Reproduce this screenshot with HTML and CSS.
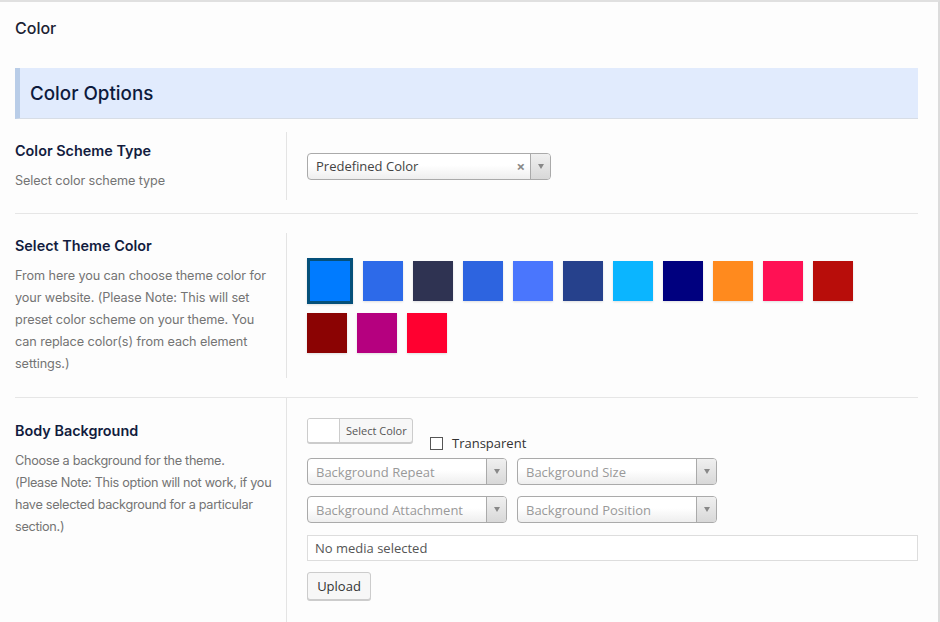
FILE: index.html
```html
<!DOCTYPE html>
<html>
<head>
<meta charset="utf-8">
<link rel="stylesheet" href="styles.css">
</head>
<body>
<div class="panel">
  <div class="page-title">Color</div>
  <div class="section-head">Color Options</div>

  <div class="row row-scheme">
    <div class="col-left">
      <div class="label">Color Scheme Type</div>
      <div class="desc">Select color scheme type</div>
    </div>
    <div class="col-right">
      <div class="select select-scheme">
        <span class="select-text">Predefined Color</span>
        <span class="select-clear">&#215;</span>
        <span class="select-arrow"><span class="tri"></span></span>
      </div>
    </div>
  </div>

  <div class="row row-theme">
    <div class="col-left">
      <div class="label">Select Theme Color</div>
      <div class="desc">From here you can choose theme color for your website. (Please Note: This will set preset color scheme on your theme. You can replace color(s) from each element settings.)</div>
    </div>
    <div class="col-right">
      <div class="swatches">
        <span class="swatch selected" style="background:#007bff"></span>
        <span class="swatch" style="background:#2d6ae9"></span>
        <span class="swatch" style="background:#2f3352"></span>
        <span class="swatch" style="background:#2d64e0"></span>
        <span class="swatch" style="background:#4a76fd"></span>
        <span class="swatch" style="background:#26418c"></span>
        <span class="swatch" style="background:#0bb5ff"></span>
        <span class="swatch" style="background:#00007f"></span>
        <span class="swatch" style="background:#ff8a1e"></span>
        <span class="swatch" style="background:#ff1154"></span>
        <span class="swatch" style="background:#b80d0a"></span>
        <span class="swatch" style="background:#8b0303"></span>
        <span class="swatch" style="background:#b5007f"></span>
        <span class="swatch" style="background:#ff0030"></span>
      </div>
    </div>
  </div>

  <div class="row row-body">
    <div class="col-left">
      <div class="label">Body Background</div>
      <div class="desc desc-lines">Choose a background for the theme.<br>(Please Note: This option will not work, if you<br>have selected background for a particular<br>section.)</div>
    </div>
    <div class="col-right">
      <div class="color-line">
        <div class="color-btn">
          <span class="color-preview"></span>
          <span class="color-btn-text">Select Color</span>
        </div>
        <label class="transparent"><span class="checkbox"></span>Transparent</label>
      </div>
      <div class="select-pair">
        <div class="select select-half">
          <span class="select-text placeholder">Background Repeat</span>
          <span class="select-arrow"><span class="tri"></span></span>
        </div>
        <div class="select select-half">
          <span class="select-text placeholder">Background Size</span>
          <span class="select-arrow"><span class="tri"></span></span>
        </div>
      </div>
      <div class="select-pair">
        <div class="select select-half">
          <span class="select-text placeholder">Background Attachment</span>
          <span class="select-arrow"><span class="tri"></span></span>
        </div>
        <div class="select select-half">
          <span class="select-text placeholder">Background Position</span>
          <span class="select-arrow"><span class="tri"></span></span>
        </div>
      </div>
      <div class="media-input">No media selected</div>
      <div class="upload-btn">Upload</div>
    </div>
  </div>
</div>
</body>
</html>
```

FILE: styles.css
```css
html, body {
  margin: 0;
  padding: 0;
}
body {
  width: 940px;
  height: 622px;
  overflow: hidden;
  background: #fcfcfc;
}
.panel {
  box-sizing: border-box;
  width: 940px;
  height: 622px;
  border-top: 2px solid #e0e0e0;
  border-right: 2px solid #dcdcdc;
  padding: 16px 20px 0 15px;
  background: #fdfdfd;
  font-family: "Inter", "Noto Sans", sans-serif;
}
.page-title {
  font-size: 16px;
  font-weight: 500;
  line-height: 20px;
  color: #1b2233;
}
.section-head {
  margin-top: 30px;
  height: 50px;
  line-height: 52px;
  background: #e1ebfd;
  border-left: 5px solid #b9cde8;
  border-bottom: 1px solid #d7dde6;
  padding-left: 10px;
  font-size: 18.8px;
  font-weight: 500;
  color: #0d1a3c;
}
.row {
  display: flex;
  border-bottom: 1px solid #e6e6e6;
}
.col-left {
  box-sizing: border-box;
  width: 272px;
  flex: none;
  border-right: 1px solid #e4e4e4;
  display: flex;
  flex-direction: column;
  justify-content: center;
}
.col-right {
  flex: 1;
  padding-left: 20px;
  display: flex;
  flex-direction: column;
  justify-content: center;
}
.label {
  font-size: 14.4px;
  font-weight: 600;
  line-height: 20px;
  color: #121c3e;
}
.desc {
  margin-top: 9px;
  font-size: 12.7px;
  line-height: 22px;
  letter-spacing: -0.1px;
  color: #747474;
  padding-right: 12px;
}
.desc-lines {
  white-space: nowrap;
  letter-spacing: -0.3px;
  padding-right: 0;
}
.row-scheme {
  padding: 13px 0;
}
.row-scheme .col-left {
  height: 68px;
}
.row-theme {
  padding: 19px 0;
}
.row-theme .col-left {
  height: 145px;
}
.row-body {
  border-bottom: none;
}
.row-body .col-left {
  justify-content: flex-start;
  padding-top: 23px;
}
.row-body .col-right {
  padding-top: 20px;
  padding-bottom: 23px;
}

/* select */
.select {
  box-sizing: border-box;
  position: relative;
  display: flex;
  align-items: center;
  height: 27px;
  border: 1px solid #aaa;
  border-radius: 4px;
  background: linear-gradient(#ffffff 45%, #eeeeee);
  font-family: "Open Sans", "Noto Sans", sans-serif;
  font-size: 13px;
  color: #444;
  overflow: hidden;
}
.select-scheme {
  width: 244px;
}
.select-text {
  flex: 1;
  padding-left: 8px;
  white-space: nowrap;
}
.select-text.placeholder {
  color: #999;
}
.select-clear {
  font-size: 15px;
  font-weight: 700;
  color: #888;
  margin-right: 5px;
  line-height: 1;
}
.select-arrow {
  box-sizing: border-box;
  width: 20px;
  height: 100%;
  border-left: 1px solid #aaa;
  background: linear-gradient(#f0f0f0, #d8d8d8);
  display: flex;
  align-items: center;
  justify-content: center;
}
.tri {
  width: 0;
  height: 0;
  border-left: 3.5px solid transparent;
  border-right: 3.5px solid transparent;
  border-top: 5px solid #888;
}

/* swatches */
.swatches {
  width: 560px;
  display: flex;
  flex-wrap: wrap;
  align-items: center;
  column-gap: 10px;
  row-gap: 9px;
}
.swatch {
  width: 40px;
  height: 40px;
  box-shadow: 0 1px 2px rgba(0, 0, 0, 0.12);
}
.swatch.selected {
  border: 3px solid #05507a;
}

/* body background */
.color-line {
  display: flex;
  height: 34px;
}
.color-btn {
  box-sizing: border-box;
  display: flex;
  height: 25px;
  width: 106px;
  border: 1px solid #ccc;
  border-radius: 3px;
  background: #f7f7f7;
  box-shadow: 0 1px 0 #ccc;
  overflow: hidden;
}
.color-preview {
  width: 31px;
  background: #fff;
  border-right: 1px solid #ccc;
}
.color-btn-text {
  font-family: "Open Sans", "Noto Sans", sans-serif;
  font-size: 11px;
  line-height: 23px;
  color: #555;
  padding-left: 6px;
}
.transparent {
  align-self: flex-end;
  display: flex;
  align-items: center;
  margin-left: 17px;
  margin-bottom: 1px;
  font-family: "Open Sans", "Noto Sans", sans-serif;
  font-size: 13px;
  line-height: 16px;
  color: #333;
}
.checkbox {
  box-sizing: border-box;
  width: 13px;
  height: 13px;
  border: 1px solid #555;
  background: #fff;
  margin-right: 9px;
}
.select-pair {
  display: flex;
  gap: 10px;
  margin-top: 6px;
}
.select-pair + .select-pair {
  margin-top: 11px;
}
.select-half {
  width: 200px;
}
.media-input {
  box-sizing: border-box;
  margin-top: 12px;
  height: 26px;
  border: 1px solid #ddd;
  background: #fff;
  padding-left: 7px;
  font-family: "Open Sans", "Noto Sans", sans-serif;
  font-size: 13px;
  line-height: 24px;
  color: #555;
}
.upload-btn {
  box-sizing: border-box;
  margin-top: 11px;
  width: 64px;
  height: 28px;
  border: 1px solid #ccc;
  border-radius: 3px;
  background: #f7f7f7;
  box-shadow: 0 1px 0 #ccc;
  font-family: "Open Sans", "Noto Sans", sans-serif;
  font-size: 13px;
  line-height: 26px;
  text-align: center;
  color: #333;
}
```
